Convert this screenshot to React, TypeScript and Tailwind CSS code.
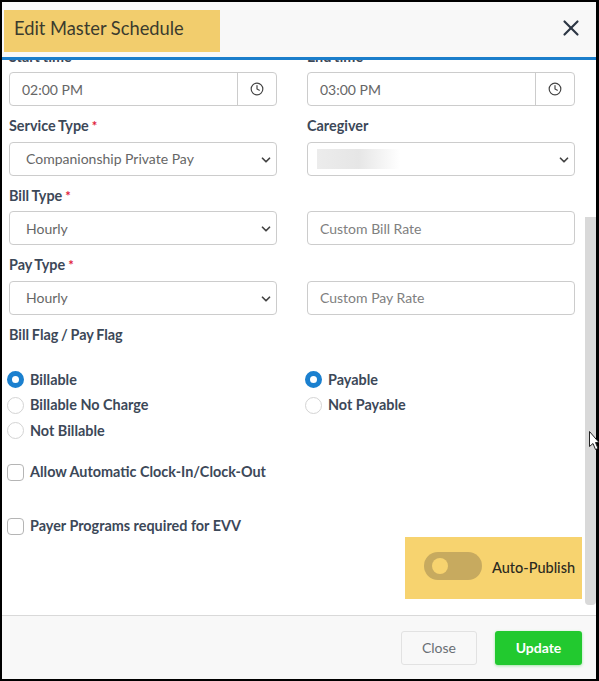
import { FC } from "react";
import { ChevronDown, Clock, X } from "lucide-react";

const Label: FC<{ text: string; required?: boolean }> = ({ text, required }) => (
  <div className="h-[20px] text-[14.4px] leading-[20px] font-bold text-[#3c4858] [word-spacing:-0.8px]">
    {text}
    {required && <span className="text-[#e0203a] ml-[3px] text-[13px]">*</span>}
  </div>
);

const TimeInput: FC<{ value: string }> = ({ value }) => (
  <div className="flex h-[34px] border border-[#cccccc] rounded-[4px] bg-white">
    <div className="flex-1 pl-[12px] text-[14px] leading-[33px] text-[#666666]">{value}</div>
    <div className="w-[39px] border-l border-[#cccccc] flex items-center justify-center text-[#444444]">
      <Clock size={14} strokeWidth={2} />
    </div>
  </div>
);

const SelectBox: FC<{ value?: string; blurred?: boolean; low?: boolean }> = ({ value, blurred, low }) => (
  <div className={`relative h-[34px] border border-[#cccccc] rounded-[4px] bg-white flex items-center pl-[16px] ${low ? "pt-[1px]" : "pb-[1px]"}`}>
    {blurred ? (
      <div className="w-[83px] h-[20px] ml-[-7px] mt-[1px] bg-linear-to-r from-[#ececec] via-[#e6e6e6] to-white" />
    ) : (
      <span className="text-[14px] text-[#666666]">{value}</span>
    )}
    <ChevronDown size={14} strokeWidth={3} className="absolute right-[3px] top-[10px] text-[#444444]" />
  </div>
);

const TextBox: FC<{ placeholder: string; high?: boolean }> = ({ placeholder, high }) => (
  <div className={`h-[34px] border border-[#cccccc] rounded-[4px] bg-white pl-[12px] text-[14px] text-[#808080] ${high ? "leading-[31px]" : "leading-[33px]"}`}>
    {placeholder}
  </div>
);

const Radio: FC<{ text: string; checked?: boolean }> = ({ text, checked }) => (
  <div className="h-[17px] flex items-center gap-[6px] text-[14.4px] font-bold text-[#3c4858]">
    {checked ? (
      <span className="w-[17px] h-[17px] rounded-full border-[5px] border-[#1b80cf] bg-white" />
    ) : (
      <span className="w-[17px] h-[17px] rounded-full border border-[#d4d4d4] bg-white" />
    )}
    {text}
  </div>
);

const Check: FC<{ text: string }> = ({ text }) => (
  <div className="h-[20px] flex items-center gap-[6px] text-[14.4px] font-bold text-[#3c4858] ml-[-2px]">
    <span className="w-[17px] h-[17px] rounded-[4px] border border-[#b5b5b5] bg-white" />
    {text}
  </div>
);

export default function App() {
  return (
    <div className="w-[599px] h-[681px] bg-black pt-[2px] pl-[2px] pr-[3px] pb-[2px] font-['Lato','Noto_Sans',sans-serif] relative overflow-hidden">
      <div className="h-full flex flex-col bg-white">
        <header className="h-[58px] shrink-0 bg-[#f8f8f8] border-b-[3px] border-[#1b7ecb] flex items-start justify-between pt-[8px] pl-[2px] pr-[12px]">
          <div className="w-[216px] h-[42px] bg-[#f2cd6d] pl-[10px] text-[18.3px] leading-[37px] text-[#3b3b2e]">
            Edit Master Schedule
          </div>
          <X size={26} strokeWidth={2} className="text-[#2c3644] mt-[5px]" />
        </header>

        <div className="flex-1 flex overflow-hidden">
          <main className="flex-1 pl-[7px] pr-[10px] overflow-hidden">
            <div className="mt-[-13px] grid grid-cols-2 gap-x-[30px]">
              <div>
                <Label text="Start time" />
                <div className="mt-[5px]"><TimeInput value="02:00 PM" /></div>
              </div>
              <div>
                <Label text="End time" />
                <div className="mt-[5px]"><TimeInput value="03:00 PM" /></div>
              </div>
              <div className="mt-[10px]">
                <Label text="Service Type" required />
                <div className="mt-[6px]"><SelectBox value="Companionship Private Pay" /></div>
              </div>
              <div className="mt-[10px]">
                <Label text="Caregiver" />
                <div className="mt-[6px]"><SelectBox blurred /></div>
              </div>
              <div className="mt-[10px]">
                <Label text="Bill Type" required />
                <div className="mt-[5px]"><SelectBox value="Hourly" low /></div>
              </div>
              <div className="mt-[35px]"><TextBox placeholder="Custom Bill Rate" /></div>
              <div className="mt-[10px]">
                <Label text="Pay Type" required />
                <div className="mt-[6px]"><SelectBox value="Hourly" /></div>
              </div>
              <div className="mt-[36px]"><TextBox placeholder="Custom Pay Rate" high /></div>
            </div>

            <div className="mt-[10px]"><Label text="Bill Flag / Pay Flag" /></div>

            <div className="mt-[26px] grid grid-cols-2 gap-x-[30px] h-[68px] ml-[-2px]">
              <div className="flex flex-col gap-[8.5px]">
                <Radio text="Billable" checked />
                <Radio text="Billable No Charge" />
                <Radio text="Not Billable" />
              </div>
              <div className="flex flex-col gap-[8.5px] ml-[-1px]">
                <Radio text="Payable" checked />
                <Radio text="Not Payable" />
              </div>
            </div>

            <div className="mt-[23px]"><Check text="Allow Automatic Clock-In/Clock-Out" /></div>
            <div className="mt-[34px]"><Check text="Payer Programs required for EVV" /></div>

            <div className="flex justify-end mt-[1px] mr-[-7px]">
              <div className="w-[177px] h-[62px] bg-[#f7d36f] flex items-center pl-[19px] gap-[10px]">
                <div className="w-[58px] h-[28px] mb-[4px] rounded-full bg-[#c7aa5f] flex items-center pl-[8px]">
                  <span className="w-[16px] h-[16px] rounded-full bg-[#f7d36f]" />
                </div>
                <span className="text-[14.5px] font-medium text-[#2b2a20]">Auto-Publish</span>
              </div>
            </div>
          </main>

          <div className="w-[11px] shrink-0 pt-[157px] pb-[10px]">
            <div className="h-full bg-[#d9d9d9] rounded-b-[4px]" />
          </div>
        </div>

        <footer className="h-[64px] shrink-0 bg-[#f8f8f8] border-t border-[#d9d9d9] flex items-start justify-end gap-[18px] pt-[15px] pr-[14px]">
          <button className="w-[76px] h-[34px] pb-[2px] border border-[#e2e2e2] rounded-[3px] bg-[#f8f8f8] text-[14px] text-[#6a6f75]">
            Close
          </button>
          <button className="w-[87px] h-[34px] pb-[2px] rounded-[3px] bg-[#22c92f] text-[14px] font-bold text-white shadow-[0_1px_3px_rgba(34,201,47,0.4)]">
            Update
          </button>
        </footer>
      </div>

      <svg className="absolute left-[589px] top-[431px]" width="10" height="20" viewBox="0 0 10 20">
        <path d="M0.5 0.5 L0.5 15.5 L4 12.5 L6.5 18.5 L9 17.5 L6.5 11.5 L10 11.5 Z" fill="#fff" stroke="#222" strokeWidth="1" />
      </svg>
    </div>
  );
}
